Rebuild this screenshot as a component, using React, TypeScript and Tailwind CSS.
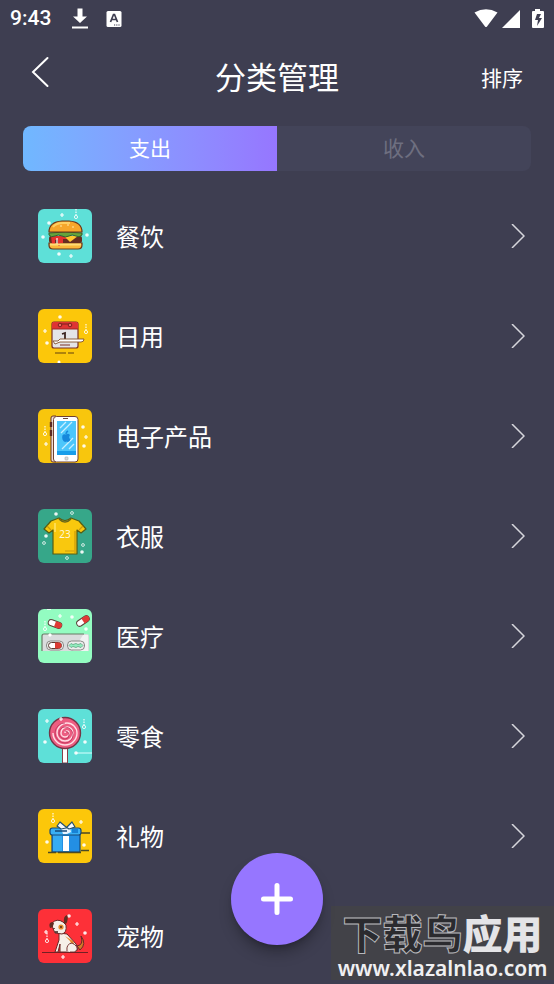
import React, { useState } from "react";
import clsx from "clsx";

interface Category {
  id: string;
  name: string;
  tile: string;
  art: React.ReactNode;
}

// Small decorations shared by the category pictures
const Spark = ({ x, y }: { x: number; y: number }) => (
  <path d={`M${x - 2} ${y}h4M${x} ${y - 2}v4`} stroke="#fff" strokeWidth="1.2" opacity="0.95" />
);

const Dot = ({ x, y }: { x: number; y: number }) => (
  <circle cx={x} cy={y} r="1.8" fill="#fff" opacity="0.9" />
);

const Ring = ({ x, y }: { x: number; y: number }) => (
  <circle cx={x} cy={y} r="1.4" fill="none" stroke="#fff" strokeWidth="0.9" opacity="0.85" />
);

const Chain = ({ x, y }: { x: number; y: number }) => (
  <g stroke="#fff" fill="none" opacity="0.85">
    <path d={`M${x} ${y - 8}v6`} strokeWidth="1.3" strokeDasharray="1.5 1" />
    <circle cx={x} cy={y} r="1.6" strokeWidth="1" />
  </g>
);

const BurgerArt = () => (
  <>
    <Spark x={24} y={6} />
    <Chain x={38} y={8} />
    <Dot x={11} y={14} />
    <Dot x={5} y={28} />
    <Dot x={49} y={26} />
    <Dot x={21} y={45} />
    <Spark x={33} y={47} />
    <path d="M11 34h33v2q0 4-4 4H15q-4 0-4-4z" fill="#f9b83a" stroke="#6d3519" strokeWidth="1.2" />
    <rect x="11" y="27" width="33" height="7" rx="2" fill="#652d20" />
    <path d="M13 27h16v3h-4v4h-3v3h-2v-6h-3v4h-3z" fill="#e5322d" />
    <path d="M19 29v6" stroke="#fff" strokeWidth="1.2" />
    <path d="M26 27h14l-8 6z" fill="#ffc72f" />
    <path d="M11 24q16-2 33 0v2q-3 3-6 1-4-2-7 0-4 2-7 0-4-2-7 0-4 2-6-1z" fill="#65a43b" stroke="#365e2d" strokeWidth="1" />
    <path d="M11 23q0-10 13-11h7q13 1 13 11z" fill="#f6a62b" stroke="#6d3519" strokeWidth="1.2" />
    <path d="M15 18q3-4 10-4h7" stroke="#ffcf62" strokeWidth="2" fill="none" />
    <path d="M22 17h2m5-1h2m3 2h2" stroke="#ffe9a6" strokeWidth="1" />
    <path d="M12 35.500h31" stroke="#ffdc75" strokeWidth="1.8" />
  </>
);

const CalendarArt = () => (
  <>
    <Dot x={22} y={8} />
    <Spark x={7} y={22} />
    <Dot x={9} y={34} />
    <Chain x={48} y={23} />
    <circle cx="21" cy="53" r="1.5" fill="#fff" />
    <rect x="14" y="13" width="26" height="26" rx="2" fill="#e4e4e7" stroke="#7b3026" strokeWidth="1.2" />
    <path d="M14 20v-5q0-2 2-2h22q2 0 2 2v5z" fill="#df3434" />
    <path d="M14 20h26" stroke="#9c2825" strokeWidth="1" />
    <path d="M22 15h10" stroke="#7b211e" strokeWidth="1.2" />
    <circle cx="22" cy="16" r="1.8" fill="#ef6b5f" stroke="#7b211e" />
    <circle cx="32" cy="16" r="1.8" fill="#ef6b5f" stroke="#7b211e" />
    <path d="m24 25 3-1v6" stroke="#3a2420" strokeWidth="1.8" fill="none" />
    <path d="M15 32h5l2-2h24q0 3-3 3H22l-5 2z" fill="#fff" stroke="#82502a" strokeWidth="0.9" />
    <path d="M22 36h10" stroke="#7b3026" strokeWidth="1" />
    <path d="M17 44h11m2 0h6" stroke="#63420e" strokeWidth="1.2" />
  </>
);

const PhoneArt = () => (
  <>
    <Chain x={7} y={25} />
    <Spark x={8} y={35} />
    <Dot x={45} y={18} />
    <Spark x={48} y={28} />
    <Dot x={46} y={37} />
    <path d="M15 53q-2 0-2-2V9q0-2 2-2h3v46z" fill="#f0dfd3" stroke="#6a3428" strokeWidth="1" />
    <path d="M13 13v5m0 3v6" stroke="#5c2a22" strokeWidth="2.4" />
    <rect x="15.5" y="7.500" width="24.500" height="45.500" rx="3" fill="#fff" stroke="#704030" strokeWidth="1" />
    <path d="M25 9.500h5" stroke="#6b4539" strokeWidth="1" />
    <rect x="19" y="12" width="19" height="34" fill="#4cc6fb" />
    <path d="M19 42h19v4H19z" fill="#199eea" />
    <path d="m22 19 6-6m-5 11 11-11m-10 27 11-11m-4 11 5-5" stroke="#c9efff" strokeWidth="1.3" />
    <path d="M28 25.500q2-1.500 4 .5-2 2.500.5 4.500Q31 34 28.500 32.500 26 34 24.500 30.500q-1.500-6 3.500-5z" fill="#1688dc" />
    <path d="M28 25q0-2 2-3" stroke="#1688dc" strokeWidth="1.4" fill="none" />
    <rect x="27" y="48" width="3" height="3" rx="0.8" fill="#ddd" stroke="#aaa" strokeWidth="0.6" />
  </>
);

const ShirtArt = () => (
  <>
    <Dot x={18} y={5} />
    <Ring x={34} y={4} />
    <Dot x={8} y={27} />
    <Ring x={6} y={34} />
    <Ring x={45} y={36} />
    <Dot x={44} y={43} />
    <Ring x={29} y={49} />
    <path d="m21 9-8 3-7 8 5 4 4-3v24h24V21l4 3 5-4-7-8-8-3q-6 5-12 0z" fill="#f9c80e" stroke="#555c14" strokeWidth="1.2" strokeLinejoin="round" />
    <path d="M21 10q6 6 12 0" stroke="#67651a" strokeWidth="1.6" fill="none" />
    <path d="m9 17 4 4m32-4-4 4M37 22v22M27 42h9" stroke="#c99b0c" strokeWidth="1.2" />
    <path d="M17 14v9" stroke="#ffe468" strokeWidth="1.5" />
    <text x="27" y="29" fill="#fff8d8" fontSize="10" textAnchor="middle" className="font-['Noto_Sans',sans-serif]">23</text>
  </>
);

const MedicineArt = () => (
  <>
    <Spark x={22} y={7} />
    <Dot x={34} y={8} />
    <Chain x={7} y={20} />
    <Dot x={48} y={20} />
    <path d="M9 0h4" stroke="#fff" strokeWidth="1.5" />
    <g transform="rotate(20 17 15)">
      <rect x="10" y="12" width="14" height="6" rx="3" fill="#fff" stroke="#584238" strokeWidth="1" />
      <path d="M17 12h4q3 0 3 3t-3 3h-4z" fill="#e03b35" />
    </g>
    <g transform="rotate(-34 45 12)">
      <rect x="38" y="9" width="14" height="6" rx="3" fill="#fff" stroke="#584238" strokeWidth="1" />
      <path d="M45 9h4q3 0 3 3t-3 3h-4z" fill="#e03b35" />
    </g>
    <path d="M4 42V27q0-2 2-2h43q2 0 2 2v15z" fill="#d9dcdd" />
    <path d="M4 42V27q0-2 2-2h40" stroke="#687b67" strokeWidth="1.2" fill="none" />
    <path d="m35 42 10-16h5v16z" fill="#f1f3f3" />
    <rect x="8.500" y="32" width="17" height="9" rx="4" fill="#eee" stroke="#8a8a86" />
    <rect x="10.500" y="33.500" width="13" height="6" rx="3" fill="#fff" stroke="#583a31" strokeWidth="1" />
    <path d="M17 33.500h3.500q3 0 3 3t-3 3H17z" fill="#dc3a33" />
    <rect x="29.500" y="32" width="17" height="9" rx="4" fill="#eee" stroke="#8a8a86" />
    <path d="m31 36.500 2-2 2 1 3-1 2 1 3-1 2 2-2 2-3-1-2 1-3-1-2 1z" fill="#91efbe" stroke="#5da180" strokeWidth="0.8" />
    <path d="m12 24 2 2-2 2-2-2z" fill="#fff" />
  </>
);

const LollipopArt = () => (
  <>
    <Spark x={9} y={12} />
    <Chain x={46} y={18} />
    <Dot x={7} y={33} />
    <Dot x={47} y={33} />
    <path d="M38 44h16" stroke="#d9ffff" strokeWidth="1" />
    <Dot x={38} y={44} />
    <path d="M24.500 38h5v16h-5z" fill="#fff" stroke="#854149" strokeWidth="1" />
    <circle cx="27" cy="24" r="15.500" fill="#ec5d81" stroke="#743647" strokeWidth="1.4" />
    <path
      d="M27 24a2 2 0 0 1 4 0a4 4 0 0 1-8 0a6 6 0 0 1 12 0a8 8 0 0 1-16 0a10 10 0 0 1 20 0a12 12 0 0 1-24 0"
      fill="none"
      stroke="#ffdde5"
      strokeWidth="1.4"
    />
    <path
      d="M25 24a4 4 0 0 1 8 0a6 6 0 0 1-12 0a8 8 0 0 1 16 0a10 10 0 0 1-20 0"
      fill="none"
      stroke="#b72d55"
      strokeWidth="1"
      transform="rotate(90 27 24)"
      opacity="0.7"
    />
    <Spark x={23} y={10} />
  </>
);

const GiftArt = () => (
  <>
    <Chain x={15} y={12} />
    <Spark x={43} y={13} />
    <Dot x={9} y={33} />
    <Dot x={46} y={36} />
    <path d="M14 25h28v18H14z" fill="#238fe4" stroke="#164a78" strokeWidth="1.2" />
    <path d="M15 26h9v16h-9z" fill="#36acf2" />
    <rect x="12" y="19" width="31" height="7" rx="2.500" fill="#39aff4" stroke="#164a78" strokeWidth="1.2" />
    <path d="M25 27h6v15h-6z" fill="#fff" />
    <path d="M23 19h9l1 4-4 2h-4z" fill="#e8f3ff" />
    <path d="m28 18-6-5-3 4 4 3 5-1 6-6 3 5-6 2z" fill="#f5faff" stroke="#245170" strokeWidth="1.2" strokeLinejoin="round" />
    <path d="M17 22h12" stroke="#164a78" strokeWidth="1.3" />
    <path d="M34 20h6v4h-6z" fill="#1781d5" />
    <path d="M43 24h9M10 43.500h8m2 0h23m0-2h8" stroke="#4b4a24" strokeWidth="1.3" />
  </>
);

const DogArt = () => (
  <>
    <Dot x={31} y={7} />
    <Spark x={39} y={15} />
    <Dot x={47} y={24} />
    <Spark x={8} y={23} />
    <Chain x={9} y={32} />
    <Spark x={25} y={48} />
    <path d="M39 37q7-1 4-10 6 8-1 14z" fill="#d17b29" stroke="#6c2826" strokeWidth="1" />
    <path d="m21 24 8 1 9 10q4 8-3 8H22v-8l-2 8h-3l4-12z" fill="#f6f0e9" stroke="#6c2826" strokeWidth="1" />
    <path d="m27 27 8 5 2 5q-4-1-5-5z" fill="#e58c2e" />
    <path d="M29 42q-1-7 5-8 6 3 5 7-2 3-7 2" fill="#f6f0e9" stroke="#6c2826" strokeWidth="0.9" />
    <path d="M14 14q5-5 11-1l3 3q1 8-4 9l-7-1q-3-5-3-10z" fill="#f6f0e9" stroke="#6c2826" strokeWidth="1" />
    <path d="M14 13q-4 1-2 6 3 0 4-5zM26 14q-1-7 3-8 2 4-1 9z" fill="#602d22" />
    <circle cx="23" cy="18" r="2.600" fill="#e58c2e" />
    <circle cx="23" cy="18" r="0.900" fill="#3b211e" />
    <path d="M16 19v1m1 3h3" stroke="#3b211e" strokeWidth="1.4" />
    <path d="M4 43.500h46" stroke="#722024" strokeWidth="1.2" />
  </>
);

const expenseCategories: Category[] = [
  { id: "food", name: "餐饮", tile: "bg-[#5ee0d8]", art: <BurgerArt /> },
  { id: "daily", name: "日用", tile: "bg-[#fcc70a]", art: <CalendarArt /> },
  { id: "digital", name: "电子产品", tile: "bg-[#f8c60d]", art: <PhoneArt /> },
  { id: "clothes", name: "衣服", tile: "bg-[#36a789]", art: <ShirtArt /> },
  { id: "medical", name: "医疗", tile: "bg-[#93fcc1]", art: <MedicineArt /> },
  { id: "snack", name: "零食", tile: "bg-[#5ee0d8]", art: <LollipopArt /> },
  { id: "gift", name: "礼物", tile: "bg-[#fcc70a]", art: <GiftArt /> },
  { id: "pet", name: "宠物", tile: "bg-[#fd3038]", art: <DogArt /> },
];

const StatusBar = () => (
  <div className="flex h-[38px] shrink-0 items-center justify-between pl-2.5 pr-2">
    <div className="flex items-center">
      <span className="w-15 font-[Roboto,sans-serif] text-[21px] font-medium">9:43</span>
      <svg className="h-6 w-5" viewBox="0 0 20 24" fill="#fff" aria-hidden="true">
        <path d="M7.500 1.500h5v8h4.500l-7 6.500-7-6.500h4.500zM2 19.500h16v2H2z" />
      </svg>
      <svg className="ml-4 h-4 w-4" viewBox="0 0 16 16" aria-hidden="true">
        <rect x="0.500" y="0" width="15" height="16" rx="1.500" fill="#fff" />
        <path d="m4.500 11 3-7.500h1l3 7.500M5.500 8.500h5" fill="none" stroke="#3e3e51" strokeWidth="1.700" />
        <path d="M8 14h1.200m1 0h1.200m1 0h1.200" stroke="#3e3e51" strokeWidth="1.200" />
      </svg>
    </div>
    <div className="flex items-center">
      <svg className="h-5 w-6" viewBox="0 0 24 20" fill="#fff" aria-hidden="true">
        <path d="M0.500 3.500Q12-3 23.500 3.500L13 17.500q-1 1-2 0z" />
      </svg>
      <svg className="ml-1 h-5 w-5" viewBox="0 0 20 20" fill="#fff" aria-hidden="true">
        <path d="M18 1v18H0z" />
      </svg>
      <svg className="ml-2 h-5 w-4" viewBox="0 0 16 20" aria-hidden="true">
        <path d="M5 0h5v2h3q1 0 1 1v15q0 1-1 1H3q-1 0-1-1V3q0-1 1-1h2z" fill="#fff" />
        <path d="M7 5h4l-2 4h3l-5 8 1-6H5z" fill="#3e3e51" />
      </svg>
    </div>
  </div>
);

const CategoryRow = ({ category }: { category: Category }) => (
  <li>
    <button type="button" className="flex h-25 w-full items-center pl-[38px] pr-[29px] text-left">
      <span className={clsx("h-[54px] w-[54px] shrink-0 overflow-hidden rounded-md", category.tile)}>
        <svg viewBox="0 0 54 54" className="h-full w-full" fill="none" aria-hidden="true">
          {category.art}
        </svg>
      </span>
      <span className="ml-6 flex-1 text-2xl">{category.name}</span>
      <svg className="h-6 w-3.5" viewBox="0 0 14 24" fill="none" stroke="#d6d6dc" strokeWidth="1.500" aria-hidden="true">
        <path d="m1 0 12 12L1 24" />
      </svg>
    </button>
  </li>
);

const Watermark = () => (
  <div className="absolute bottom-1 right-0 flex h-[74px] w-[223px] flex-col items-center justify-between bg-[#424248] pt-1 pb-0.5">
    <div className="text-[40px] leading-[44px] font-black whitespace-nowrap">
      <span className="text-[#2b2b2f] [-webkit-text-stroke:1px_#b8b8bc]">下载鸟</span>
      <span className="text-[#e4e4e7]">应用</span>
    </div>
    <div className="font-['Noto_Sans',sans-serif] text-[21px] leading-5 font-semibold text-[#f0f0f2]">
      www.xlazalnlao.com
    </div>
  </div>
);

export default function App() {
  const [tab, setTab] = useState<"expense" | "income">("expense");

  const tabClass = (active: boolean) =>
    clsx(
      "flex-1 pb-0.5 text-[21px]",
      active ? "bg-linear-to-r from-[#70b8ff] to-[#9676ff] text-white" : "text-[#6e6f80]"
    );

  return (
    <div className="relative flex h-screen flex-col overflow-hidden bg-[#3e3e51] font-['Noto_Sans_CJK_SC',sans-serif] text-white">
      <StatusBar />

      {/* Header */}
      <header className="grid h-19 shrink-0 grid-cols-3 items-center px-[31px]">
        <button type="button" aria-label="返回" className="mb-2 w-5">
          <svg className="h-8 w-5" viewBox="0 0 20 32" fill="none" stroke="#fff" strokeWidth="2" strokeLinecap="round" aria-hidden="true">
            <path d="M16.500 2 2 16l14.500 14" />
          </svg>
        </button>
        <h1 className="text-center text-[31px] whitespace-nowrap">分类管理</h1>
        <button type="button" className="justify-self-end pt-1 text-[21px]">排序</button>
      </header>

      {/* Tabs */}
      <div role="tablist" className="mx-[23px] mt-3 mb-[15px] flex h-[45px] shrink-0 overflow-hidden rounded-lg bg-[#434459]">
        <button type="button" role="tab" aria-selected={tab === "expense"} className={tabClass(tab === "expense")} onClick={() => setTab("expense")}>
          支出
        </button>
        <button type="button" role="tab" aria-selected={tab === "income"} className={tabClass(tab === "income")} onClick={() => setTab("income")}>
          收入
        </button>
      </div>

      {/* Category list */}
      <main className="min-h-0 flex-1 overflow-y-auto [scrollbar-width:none]">
        <ul>
          {tab === "expense" && expenseCategories.map((category) => (
            <CategoryRow key={category.id} category={category} />
          ))}
        </ul>
      </main>

      <Watermark />

      <button
        type="button"
        aria-label="添加分类"
        className="absolute bottom-[39px] left-1/2 flex h-23 w-23 -translate-x-1/2 items-center justify-center rounded-full bg-[#9676ff] shadow-lg shadow-black/30"
      >
        <svg className="h-8 w-8" viewBox="0 0 32 32" stroke="#fff" strokeWidth="5" strokeLinecap="round" aria-hidden="true">
          <path d="M16 2.500v27M2.500 16h27" />
        </svg>
      </button>
    </div>
  );
}
